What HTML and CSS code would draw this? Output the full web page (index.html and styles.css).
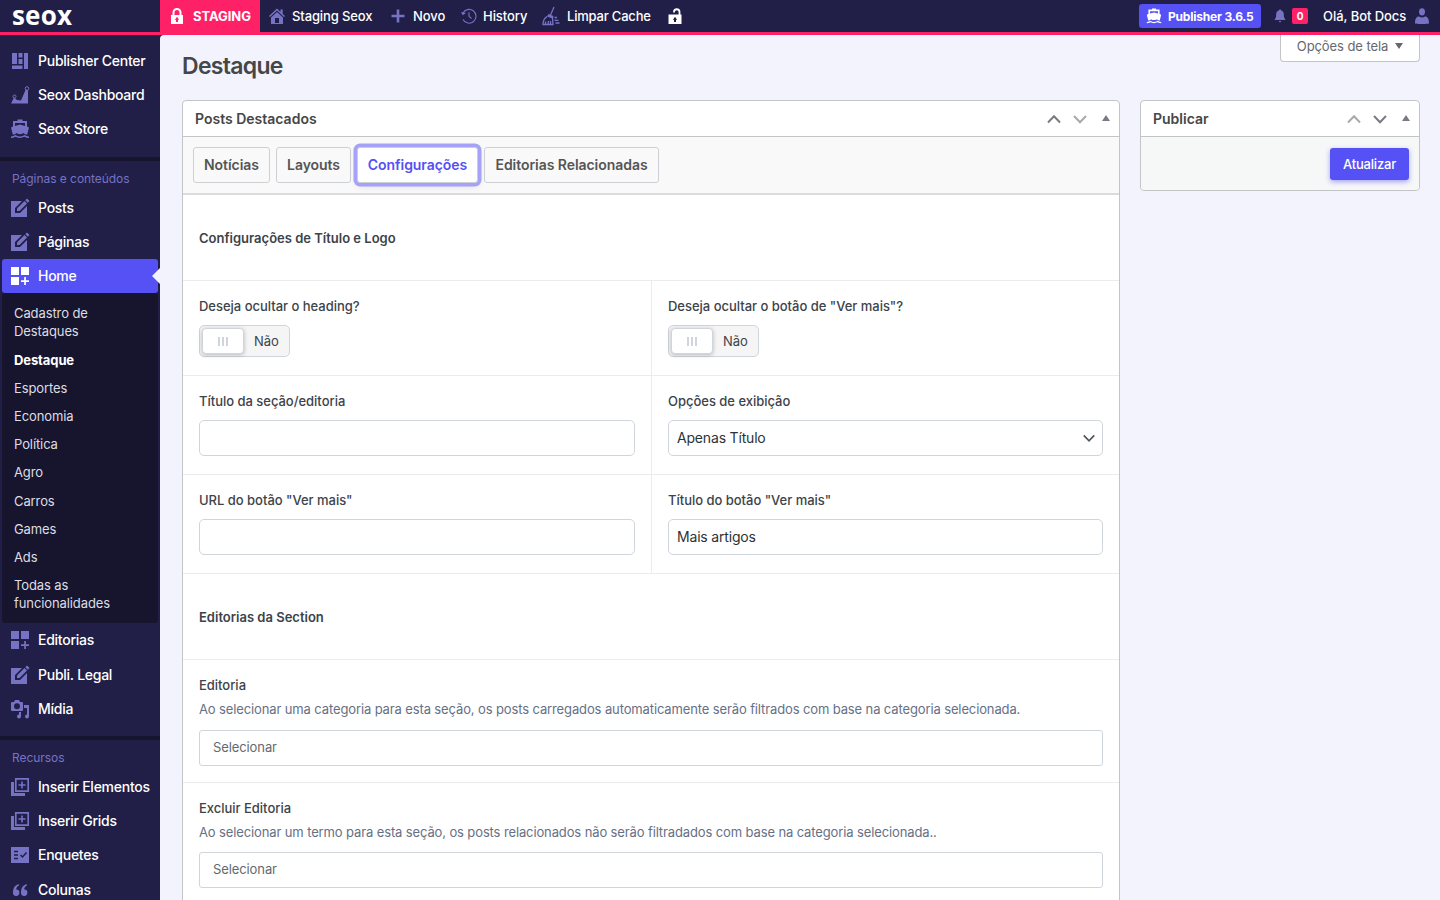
FILE: index.html
```html
<!DOCTYPE html>
<html lang="pt-BR">
<head>
    <meta charset="UTF-8">
    <meta name="viewport" content="width=device-width, initial-scale=1.0">
    <title>Destaque - Seox</title>
    <link rel="stylesheet" href="styles.css">
</head>
<body>
    <!-- shared icons -->
    <svg class="sprite" width="0" height="0">
        <symbol id="ship" viewBox="0 0 20 20"><path fill-rule="evenodd" d="M7.500.500h5V2H17v5.500l2 1-1.800 7c-1.500 0-2.700-.500-3.700-1.500-1.500 1.500-5.500 1.500-7 0-1 1-2.200 1.500-3.700 1.500L1 8.500l2-1V2h4.500zM5 4v3l5-1.500L15 7V4z"/><path d="M1 18.300c2 0 3-.600 4.500-1.400 2.500 1.600 6 1.600 9 0 1.500.800 2.500 1.400 4.500 1.400" fill="none" stroke="currentColor" stroke-width="1.500"/></symbol>
        <symbol id="edit" viewBox="0 0 20 20"><path d="M1 3h11L5 10v5h5l7-7v11H1z"/><path d="M7 13v-2.500L14.500 3 17 5.500 9.500 13z"/><path d="M15.300 2.200L17 .500 19.500 3l-1.700 1.700z"/></symbol>
        <symbol id="blocks" viewBox="0 0 20 20"><path d="M1 1h8v8H1zM11 1h8v8h-8zM1 11h8v8H1zM14.200 11h1.700v3.200H19v1.700h-3.100V19h-1.700v-3.100H11v-1.700h3.200z"/></symbol>
        <symbol id="insert" viewBox="0 0 20 20"><path d="M1 5h3v11h11v3H1z"/><path d="M5.800 1.800h12.400v12.400H5.800z" fill="none" stroke="currentColor" stroke-width="1.700"/><path d="M11.200 4.500h1.600v2.700h2.700v1.600h-2.700v2.700h-1.600V8.800H8.500V7.200h2.700z"/></symbol>
        <symbol id="up" viewBox="0 0 16 16"><path d="M2 11.500L8 5.300l6 6.200" fill="none" stroke="currentColor" stroke-width="2"/></symbol>
        <symbol id="down" viewBox="0 0 16 16"><path d="M2 5l6 6.200L14 5" fill="none" stroke="currentColor" stroke-width="2"/></symbol>
    </svg>

    <header class="topbar">
        <div class="logo">seox</div>
        <a class="bar-item staging">
            <svg viewBox="0 0 14 16" width="14" height="16"><path d="M3.500 7V4.500a3.500 3.500 0 017 0V7" fill="none" stroke="currentColor" stroke-width="2"/><path fill-rule="evenodd" d="M1 7h12v9H1zM6 9.500v1.200H5.300V12H6v2h2v-2h.700v-1.300H8V9.500z"/></svg>
            <span>STAGING</span>
        </a>
        <a class="bar-item site">
            <svg viewBox="0 0 16 16" width="16" height="16"><path d="M0 8L8 .500 11.500 4V1.500h2.200V6L16 8l-1 1-7-6.500L1 9z"/><path fill-rule="evenodd" d="M2 9.500l6-5.500 6 5.500V16H2zM6 10v5h4v-5z"/></svg>
            <span>Staging Seox</span>
        </a>
        <a class="bar-item novo">
            <svg viewBox="0 0 14 14" width="14" height="14"><path d="M5.700.500h2.600v5.200h5.200v2.600H8.300v5.200H5.700V8.300H.500V5.700h5.200z"/></svg>
            <span>Novo</span>
        </a>
        <a class="bar-item history">
            <svg viewBox="0 0 16 16" width="16" height="16"><g fill="none" stroke="currentColor" stroke-width="1.100"><path d="M1.800 5.500A6.900 6.900 0 112 11.500"/><path d="M8 4.300v4l2.500 2.200"/></g><path d="M0 4l1.700 3.300L5 5z"/></svg>
            <span>History</span>
        </a>
        <a class="bar-item cache">
            <svg viewBox="0 0 18 20" width="18" height="20"><path d="M12 1L8.500 9" fill="none" stroke="currentColor" stroke-width="1.300"/><path d="M6.500 8l5 2-.500 2.700-6-2.200z"/><path d="M5 10.500c-3 2-4 4.500-4 8h10l-.500-6.500M3.500 18.500v-3M6 18.500l.500-3.500M8.500 18.500V15M12.500 11.500h2.500M12.500 14.300h4M13.500 17h4" fill="none" stroke="currentColor" stroke-width="1.300"/></svg>
            <span>Limpar Cache</span>
        </a>
        <a class="bar-item unlock">
            <svg viewBox="0 0 14 16" width="14" height="16"><path d="M6 4.500V4a2.700 2.700 0 015.500 0v3.500" fill="none" stroke="currentColor" stroke-width="1.800"/><path fill-rule="evenodd" d="M.500 6.500h13V16H.500zM6 9.500v1.200h-.700V12H6v2h2v-2h.700v-1.300H8V9.500z"/></svg>
        </a>
        <div class="bar-right">
            <a class="version">
                <svg width="16" height="16"><use href="#ship"/></svg>
                <span>Publisher 3.6.5</span>
            </a>
            <svg class="bell" viewBox="0 0 12 14" width="12" height="14"><path d="M6 0l1 1.200c2 .600 2.800 2.300 2.800 4.300 0 2.500.700 4 1.700 5.500H.500C1.500 9.500 2.200 8 2.200 5.500c0-2 .800-3.700 2.800-4.300zM4.500 12h3L6 13.500z"/></svg>
            <span class="count">0</span>
            <a class="account">Olá, Bot Docs</a>
            <svg class="avatar" viewBox="0 0 14 16" width="14" height="16"><ellipse cx="7" cy="3.800" rx="3" ry="3.600"/><path d="M0 15.500C0 10 2 8.500 4 8.500c2 1.300 4 1.300 6 0 2 0 4 1.500 4 7-3 .700-11 .700-14 0z"/></svg>
        </div>
    </header>

    <div class="layout">
        <nav class="sidebar">
            <ul class="menu">
                <li><svg viewBox="0 0 20 20"><path d="M2 2h5v11H2zM8.500 2h4v4.500h-4zM14 2h4v16h-4zM8.500 8h4v5h-4zM2 14.500h10.500V18H2z"/></svg><span>Publisher Center</span></li>
                <li><svg viewBox="0 0 20 20"><path d="M1 18.500l3-6 3 2.500 4 .500L15.500 5 18 5v13.500z"/><circle cx="4.500" cy="11.500" r="1.500" fill="none" stroke="currentColor"/><circle cx="17" cy="3.500" r="1.800" fill="none" stroke="currentColor"/></svg><span>Seox Dashboard</span></li>
                <li><svg><use href="#ship"/></svg><span>Seox Store</span></li>
            </ul>
            <h2 class="menu-title">Páginas e conteúdos</h2>
            <ul class="menu">
                <li><svg><use href="#edit"/></svg><span>Posts</span></li>
                <li><svg><use href="#edit"/></svg><span>Páginas</span></li>
                <li class="current"><svg><use href="#blocks"/></svg><span>Home</span></li>
            </ul>
            <ul class="submenu">
                <li>Cadastro de Destaques</li>
                <li class="active">Destaque</li>
                <li>Esportes</li>
                <li>Economia</li>
                <li>Política</li>
                <li>Agro</li>
                <li>Carros</li>
                <li>Games</li>
                <li>Ads</li>
                <li>Todas as funcionalidades</li>
            </ul>
            <ul class="menu">
                <li><svg><use href="#blocks"/></svg><span>Editorias</span></li>
                <li><svg><use href="#edit"/></svg><span>Publi. Legal</span></li>
                <li><svg viewBox="0 0 20 20"><path fill-rule="evenodd" d="M2 3h2l1-2h4l1 2h2q1 0 1 1v7q0 1-1 1H2q-1 0-1-1V4q0-1 1-1zM7 4.200a3 3 0 100 6 3 3 0 000-6z"/><path d="M14 6h5v11.500a2 2 0 11-2-2V9h-3zM9 13h2v4.500a2 2 0 11-2-2z"/></svg><span>Mídia</span></li>
            </ul>
            <h2 class="menu-title resources">Recursos</h2>
            <ul class="menu">
                <li><svg><use href="#insert"/></svg><span>Inserir Elementos</span></li>
                <li><svg><use href="#insert"/></svg><span>Inserir Grids</span></li>
                <li><svg viewBox="0 0 20 20"><path d="M1 2h18v16H1z"/><path d="M4 6.500h4M4 10h4M4 13.500h4M10.500 10l2 2 4-4.500" fill="none" stroke="#211f47" stroke-width="1.500"/></svg><span>Enquetes</span></li>
                <li><svg viewBox="0 0 20 20"><path d="M8.500 4C4.500 5.500 3 8.500 3 12.500a3.200 3.200 0 103.200-3C6.200 8 7 6.500 9 5.500zM16.500 4c-4 1.500-5.500 4.500-5.500 8.500a3.200 3.200 0 103.200-3c0-1.500.800-3 2.800-4z"/></svg><span>Colunas</span></li>
            </ul>
        </nav>

        <main class="content">
            <div class="page-head">
                <h1>Destaque</h1>
                <button class="screen-options">Opções de tela <i class="tri-down"></i></button>
            </div>

            <div class="columns">
                <section class="box">
                    <div class="box-head">
                        <h2>Posts Destacados</h2>
                        <div class="box-actions">
                            <svg><use href="#up"/></svg>
                            <svg class="off"><use href="#down"/></svg>
                            <i class="tri-up"></i>
                        </div>
                    </div>
                    <div class="tabs">
                        <button class="tab tab-news">Notícias</button>
                        <button class="tab tab-layouts">Layouts</button>
                        <button class="tab tab-config selected">Configurações</button>
                        <button class="tab tab-related">Editorias Relacionadas</button>
                    </div>

                    <div class="heading">Configurações de Título e Logo</div>
                    <div class="row">
                        <div class="cell">
                            <label>Deseja ocultar o heading?</label>
                            <div class="switch"><span class="knob"><i></i><i></i><i></i></span><span class="state">Não</span></div>
                        </div>
                        <div class="cell">
                            <label>Deseja ocultar o botão de "Ver mais"?</label>
                            <div class="switch"><span class="knob"><i></i><i></i><i></i></span><span class="state">Não</span></div>
                        </div>
                    </div>
                    <div class="row">
                        <div class="cell">
                            <label>Título da seção/editoria</label>
                            <div class="field"></div>
                        </div>
                        <div class="cell">
                            <label>Opções de exibição</label>
                            <div class="field select"><span>Apenas Título</span><svg width="14" height="14"><use href="#down"/></svg></div>
                        </div>
                    </div>
                    <div class="row">
                        <div class="cell">
                            <label>URL do botão "Ver mais"</label>
                            <div class="field"></div>
                        </div>
                        <div class="cell">
                            <label>Título do botão "Ver mais"</label>
                            <div class="field">Mais artigos</div>
                        </div>
                    </div>

                    <div class="heading">Editorias da Section</div>
                    <div class="row">
                        <div class="cell full">
                            <label>Editoria</label>
                            <p>Ao selecionar uma categoria para esta seção, os posts carregados automaticamente serão filtrados com base na categoria selecionada.</p>
                            <div class="field picker">Selecionar</div>
                        </div>
                    </div>
                    <div class="row">
                        <div class="cell full last">
                            <label>Excluir Editoria</label>
                            <p>Ao selecionar um termo para esta seção, os posts relacionados não serão filtradados com base na categoria selecionada..</p>
                            <div class="field picker">Selecionar</div>
                        </div>
                    </div>
                </section>

                <aside class="box publish">
                    <div class="box-head">
                        <h2>Publicar</h2>
                        <div class="box-actions">
                            <svg class="off"><use href="#up"/></svg>
                            <svg><use href="#down"/></svg>
                            <i class="tri-up"></i>
                        </div>
                    </div>
                    <div class="publish-body">
                        <button class="update">Atualizar</button>
                    </div>
                </aside>
            </div>
        </main>
    </div>
</body>
</html>
```

FILE: styles.css
```css
* {
    box-sizing: border-box;
}

body {
    margin: 0;
    height: 900px;
    overflow: hidden;
    background: #211f47;
    font-family: Inter, "Liberation Sans", sans-serif;
    font-size: 13px;
    color: #3c434a;
}

h1, h2, p, ul {
    margin: 0;
    padding: 0;
}

ul {
    list-style: none;
}

button {
    font-family: inherit;
}

svg {
    fill: currentColor;
    flex: none;
}

.sprite {
    position: absolute;
}

/* top bar */
.topbar {
    display: flex;
    height: 35px;
    background: #211f47;
    border-bottom: 3px solid #ff2168;
    color: #fff;
    font-size: 13px;
    font-weight: 500;
    letter-spacing: -0.05px;
    white-space: nowrap;
}

.logo {
    width: 160px;
    padding-left: 12px;
    font-family: "Open Sans", sans-serif;
    font-size: 26px;
    font-weight: 700;
    line-height: 30px;
    letter-spacing: 0.2px;
}

.bar-item {
    display: flex;
    align-items: center;
    height: 32px;
}

.bar-item svg {
    color: #7673c4;
}

.staging {
    width: 100px;
    padding-left: 10px;
    gap: 9px;
    background: #ff2168;
    font-weight: 700;
}

.bar-item.staging svg, .bar-item.unlock svg {
    color: #fff;
}

.site {
    width: 122px;
    padding-left: 9px;
    gap: 7px;
    letter-spacing: -0.12px;
}

.novo {
    width: 70px;
    padding-left: 9px;
    gap: 8px;
}

.history {
    width: 82px;
    padding-left: 9px;
    gap: 6px;
}

.cache {
    width: 126px;
    padding-left: 8px;
    gap: 7px;
    letter-spacing: -0.2px;
}

.unlock {
    padding-left: 8px;
}

.bar-right {
    display: flex;
    align-items: center;
    height: 32px;
    margin-left: auto;
    padding-right: 11px;
}

.version {
    display: flex;
    align-items: center;
    gap: 6px;
    width: 122px;
    height: 24px;
    padding-left: 7px;
    border-radius: 3px;
    background: #5551f4;
    font-size: 12px;
    font-weight: 700;
    letter-spacing: -0.2px;
}

.bell {
    margin-left: 13px;
    color: #7673c4;
}

.count {
    width: 16px;
    height: 16px;
    margin: 0 15px 0 6px;
    border-radius: 2px;
    background: #ff2168;
    font-size: 10px;
    font-weight: 700;
    line-height: 16px;
    text-align: center;
}

.account {
    width: 92px;
}

.avatar {
    color: #7673c4;
}

/* sidebar */
.layout {
    display: flex;
    height: 865px;
}

.sidebar {
    flex: none;
    width: 160px;
    padding-top: 8.600px;
    color: #fff;
}

.menu li {
    display: flex;
    align-items: center;
    gap: 8px;
    height: 34.15px;
    padding-left: 10px;
    font-size: 14px;
    font-weight: 500;
    letter-spacing: -0.26px;
    white-space: nowrap;
}

.menu span {
    padding-bottom: 1px;
}

.menu svg {
    width: 20px;
    height: 20px;
    color: #7673c4;
}

.menu .current {
    position: relative;
    margin: 0 2px;
    padding-left: 8px;
    border-radius: 3px;
    background: #5551f4;
}

.menu .current svg {
    color: #fff;
}

.current::after {
    content: "";
    position: absolute;
    right: -2px;
    top: 9px;
    border: 8px solid transparent;
    border-left: 0;
    border-right-color: #f3f3fe;
}

.menu-title {
    height: 34px;
    margin-top: 10.800px;
    padding: 8px 12px 0;
    border-top: 4px solid #17152e;
    color: #7673c4;
    font-size: 12px;
    font-weight: 400;
    line-height: 19px;
    letter-spacing: -0.05px;
}

.menu-title.resources {
    margin-top: 10.250px;
}

.submenu {
    margin: 0 2px;
    padding: 6px 12px 5.700px;
    border-radius: 3px;
    background: #17152e;
    color: #dddde4;
    font-size: 13px;
    line-height: 18.2px;
    letter-spacing: -0.1px;
}

.submenu li {
    padding: 5px 0;
}

.submenu .active {
    color: #fff;
    font-weight: 700;
}

/* content */
.content {
    flex: 1;
    min-width: 0;
    padding: 0 20px 0 22px;
    border-top-left-radius: 4px;
    background: #f3f3fe;
    overflow: hidden;
}

.page-head {
    display: flex;
    justify-content: space-between;
    align-items: flex-start;
    height: 65px;
}

h1 {
    padding-top: 15px;
    color: #464646;
    font-size: 23px;
    font-weight: 600;
    line-height: 32px;
    letter-spacing: -0.7px;
}

.screen-options {
    display: flex;
    align-items: center;
    justify-content: center;
    gap: 7px;
    width: 140px;
    height: 27px;
    padding: 0 0 4px;
    border: 1px solid #c3c4c7;
    border-top: 0;
    border-radius: 0 0 4px 4px;
    background: #fff;
    color: #646970;
    font-size: 13px;
    letter-spacing: -0.08px;
}

.tri-down {
    border: 4px solid transparent;
    border-top: 6px solid #646970;
    border-bottom: 0;
}

.tri-up {
    border: 4px solid transparent;
    border-bottom: 6px solid #787c82;
    border-top: 0;
}

.columns {
    display: flex;
    align-items: flex-start;
    gap: 20px;
}

.box {
    width: 938px;
    border: 1px solid #c3c4c7;
    border-radius: 4px;
    background: #fff;
}

.box-head {
    display: flex;
    align-items: center;
    justify-content: space-between;
    height: 36px;
    padding: 0 9px 0 12px;
    border-bottom: 1px solid #c3c4c7;
}

.box-head h2 {
    color: #464646;
    font-size: 14px;
    font-weight: 600;
}

.box-actions {
    display: flex;
    align-items: center;
    gap: 10px;
    color: #787c82;
}

.box-actions svg {
    width: 16px;
    height: 16px;
}

.box-actions .off {
    color: #a7aaad;
}

.box-actions .tri-up {
    margin-left: 4px;
    margin-bottom: 2px;
}

.tabs {
    display: flex;
    gap: 6px;
    height: 58px;
    padding: 10px;
    border-bottom: 2px solid #d9dbdf;
    background: #f9f9f9;
}

.tab {
    height: 36px;
    padding: 0 0 2px;
    border: 1px solid #ccd0d4;
    border-radius: 3px;
    background: #f9f9f9;
    color: #555;
    font-size: 14px;
    font-weight: 600;
    letter-spacing: -0.05px;
}

.tab-news {
    width: 77px;
}

.tab-layouts {
    width: 75px;
}

.tab-config {
    width: 121px;
}

.tab-related {
    width: 175px;
}

.tab.selected {
    background: #fff;
    color: #5551f4;
    box-shadow: 0 0 0 3.500px #a5a2f8, 0 3px 8px rgba(0, 0, 0, .12);
}

.heading {
    height: 86px;
    padding: 0 16px;
    border-bottom: 1px solid #eaecf0;
    font-size: 13px;
    font-weight: 600;
    line-height: 87px;
}

.row {
    display: flex;
    border-bottom: 1px solid #eaecf0;
}

.cell {
    width: 468px;
    padding: 16px 16px 18px;
}

.cell + .cell {
    border-left: 1px solid #eaecf0;
}

.cell.full {
    width: 100%;
    padding-bottom: 16px;
}

.cell label {
    display: block;
    height: 19px;
    margin-bottom: 9px;
    font-weight: 500;
    line-height: 19px;
    letter-spacing: -0.02px;
}

.cell.full label {
    margin-bottom: 5px;
}

.cell p {
    height: 19px;
    margin-bottom: 11px;
    color: #667085;
    line-height: 19px;
    letter-spacing: -0.122px;
    white-space: nowrap;
}

.cell.last p {
    margin-bottom: 10px;
}

.field {
    height: 36px;
    padding: 0 8px;
    border: 1px solid #d0d5dd;
    border-radius: 5px;
    background: #fff;
    color: #2c3338;
    font-size: 14px;
    line-height: 34px;
    letter-spacing: -0.18px;
}

.select {
    display: flex;
    align-items: center;
    justify-content: space-between;
    padding-right: 6px;
}

.select svg {
    color: #50575e;
}

.picker {
    padding: 0 13px;
    border-radius: 3px;
    color: #646970;
    font-size: 13px;
    line-height: 33px;
    letter-spacing: -0.1px;
}

.switch {
    display: flex;
    align-items: center;
    width: 91px;
    height: 32px;
    padding-left: 2px;
    border: 1px solid #d0d5dd;
    border-radius: 5px;
    background: #f5f5f5;
}

.knob {
    display: flex;
    align-items: center;
    justify-content: center;
    gap: 2px;
    width: 42px;
    height: 26px;
    border: 1px solid #d0d5dd;
    border-radius: 4px;
    background: #fff;
    box-shadow: 0 1px 4px rgba(0, 0, 0, .25);
}

.knob i {
    width: 2px;
    height: 9px;
    background: #d0d5dd;
}

.state {
    margin-left: 10px;
}

/* publish box */
.publish {
    width: 280px;
}

.publish-body {
    display: flex;
    justify-content: flex-end;
    height: 53px;
    padding: 11px 10px 10px;
    border-radius: 0 0 4px 4px;
    background: #f6f7f7;
}

.update {
    width: 79px;
    height: 32px;
    padding: 0;
    border: 0;
    border-radius: 3px;
    background: #5551f4;
    color: #fff;
    font-size: 13px;
    font-weight: 500;
    letter-spacing: -0.2px;
    box-shadow: 0 2px 5px rgba(86, 80, 245, .5);
}
```
